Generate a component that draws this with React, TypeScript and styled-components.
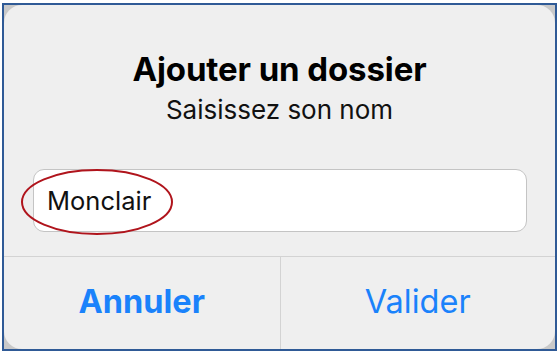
import React from 'react'
import styled, { createGlobalStyle } from 'styled-components'

const GlobalStyle = createGlobalStyle`
  html, body {
    margin: 0;
    padding: 0;
    background: #ffffff;
  }
  body {
    font-family: Inter, "Liberation Sans", Arial, sans-serif;
  }
`

const Page = styled.div`
  width: 559px;
  height: 354px;
  padding: 3px 0 0 2px;
  box-sizing: border-box;
`

const Frame = styled.div`
  width: 555px;
  height: 348px;
  box-sizing: border-box;
  border: 2px solid #2f5a96;
  background: #c9c9c9;
  display: flex;
`

const Dialog = styled.div`
  flex: 1;
  background: #efefef;
  border-radius: 18px;
  display: flex;
  flex-direction: column;
`

const Header = styled.div`
  display: flex;
  flex-direction: column;
  align-items: center;
  padding-top: 44px;
`

const Title = styled.h1`
  margin: 0;
  font-size: 33px;
  line-height: 40px;
  font-weight: 700;
  color: #000;
  letter-spacing: -0.1px;
`

const Subtitle = styled.p`
  margin: 5px 0 0;
  font-size: 26px;
  line-height: 32px;
  font-weight: 400;
  color: #111;
`

const Body = styled.div`
  padding: 43px 28px 0 29px;
`

const InputWrap = styled.div`
  position: relative;
`

const Input = styled.input`
  display: block;
  width: 100%;
  height: 63px;
  box-sizing: border-box;
  border: 1px solid #c4c4c4;
  border-radius: 11px;
  background: #fff;
  padding: 0 13px;
  font-family: inherit;
  font-size: 25.5px;
  color: #111;
  outline: none;
`

const Highlight = styled.svg`
  position: absolute;
  left: -13px;
  top: -1px;
  width: 154px;
  height: 68px;
  pointer-events: none;
`

const Actions = styled.div`
  margin-top: 24px;
  flex: 1;
  display: grid;
  grid-template-columns: 1fr 1fr;
  border-top: 1px solid #d3d3d3;
`

const Action = styled.button<{ $primary?: boolean }>`
  border: none;
  background: transparent;
  font-family: inherit;
  font-size: 32.5px;
  font-weight: ${({ $primary }) => ($primary ? 700 : 400)};
  color: #1a82fb;
  padding: 0 0 3px;
  cursor: pointer;
  & + & {
    border-left: 1px solid #d3d3d3;
  }
`

export default function App() {
  return (
    <Page>
      <GlobalStyle />
      <Frame>
        <Dialog>
          <Header>
            <Title>Ajouter un dossier</Title>
            <Subtitle>Saisissez son nom</Subtitle>
          </Header>
          <Body>
            <InputWrap>
              <Input defaultValue="Monclair" readOnly />
              <Highlight viewBox="0 0 154 68">
                <ellipse cx="77" cy="34" rx="75" ry="32" fill="none" stroke="#b0141c" strokeWidth="2" />
              </Highlight>
            </InputWrap>
          </Body>
          <Actions>
            <Action $primary>Annuler</Action>
            <Action>Valider</Action>
          </Actions>
        </Dialog>
      </Frame>
    </Page>
  )
}
